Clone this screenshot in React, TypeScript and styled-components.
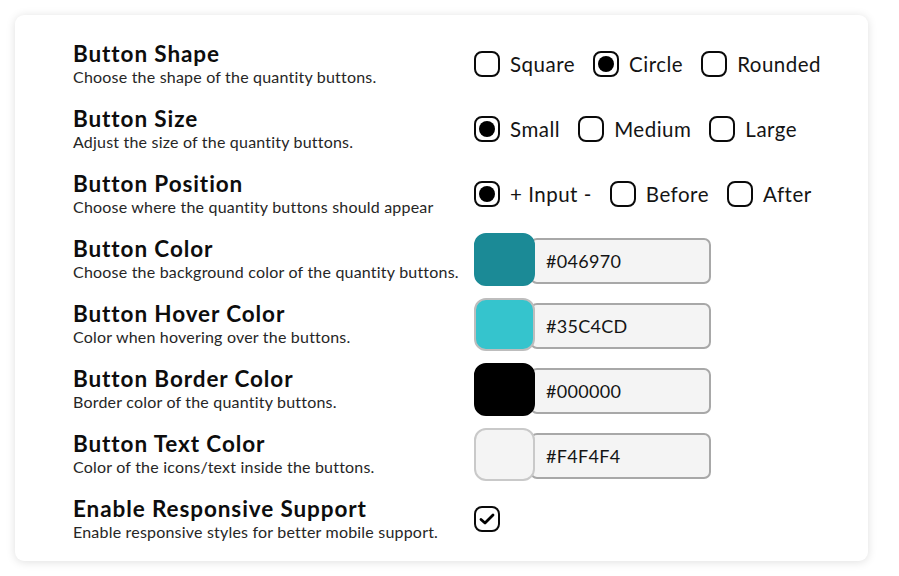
import React from "react";
import styled, { createGlobalStyle } from "styled-components";

const Global = createGlobalStyle`
  html, body { margin: 0; padding: 0; background: #ffffff; }
  body { font-family: "Lato", "Noto Sans", sans-serif; color: #111; }
`;

const Page = styled.div`
  padding: 15px 31px 15px 15px;
`;

const Card = styled.div`
  width: 853px;
  height: 546px;
  box-sizing: border-box;
  background: #fff;
  border-radius: 9px;
  box-shadow: 0 1px 10px rgba(0, 0, 0, 0.13);
  padding: 23px 0 0 58px;
`;

const Grid = styled.div`
  display: grid;
  grid-template-columns: 401px 1fr;
  grid-auto-rows: 52px;
  row-gap: 13px;
`;

const TextBlock = styled.div`
  display: flex;
  flex-direction: column;
  justify-content: center;
`;

const Title = styled.div`
  font-size: 22.5px;
  font-weight: 700;
  letter-spacing: 0.9px;
  line-height: 26px;
  color: #0d0d0d;
`;

const Desc = styled.div`
  font-size: 16px;
  letter-spacing: 0.2px;
  line-height: 20px;
  color: #262626;
`;

const Control = styled.div`
  display: flex;
  align-items: center;
`;

const RadioGroup = styled.div`
  display: flex;
  align-items: center;
  gap: 18px;
`;

const RadioItem = styled.label`
  display: flex;
  align-items: center;
  gap: 10px;
  font-size: 20.5px;
  letter-spacing: 0.5px;
  color: #141414;
`;

const Box = styled.span`
  width: 26px;
  height: 26px;
  box-sizing: border-box;
  border: 2px solid #0a0a0a;
  border-radius: 8px;
  display: flex;
  align-items: center;
  justify-content: center;
`;

const Dot = styled.span`
  width: 16px;
  height: 16px;
  border-radius: 50%;
  background: #000;
`;

const ColorField = styled.div`
  display: flex;
  align-items: center;
`;

const Swatch = styled.div<{ $c: string; $b: string }>`
  width: 61px;
  height: 53px;
  box-sizing: border-box;
  border-radius: 12px;
  background: ${(p) => p.$c};
  border: 2px solid ${(p) => p.$b};
  position: relative;
  z-index: 1;
`;

const HexInput = styled.div`
  width: 181px;
  height: 46px;
  box-sizing: border-box;
  margin-left: -5px;
  margin-top: 3px;
  border: 2px solid #a8a8a8;
  border-radius: 7px;
  background: #f4f4f4;
  padding-left: 14px;
  display: flex;
  align-items: center;
  font-size: 18px;
  letter-spacing: 0.3px;
  color: #141414;
`;

type Row =
  | { title: string; desc: string; kind: "radio"; options: string[]; selected: number }
  | { title: string; desc: string; kind: "color"; color: string; border: string; hex: string }
  | { title: string; desc: string; kind: "check" };

const rows: Row[] = [
  { title: "Button Shape", desc: "Choose the shape of the quantity buttons.", kind: "radio", options: ["Square", "Circle", "Rounded"], selected: 1 },
  { title: "Button Size", desc: "Adjust the size of the quantity buttons.", kind: "radio", options: ["Small", "Medium", "Large"], selected: 0 },
  { title: "Button Position", desc: "Choose where the quantity buttons should appear", kind: "radio", options: ["+ Input -", "Before", "After"], selected: 0 },
  { title: "Button Color", desc: "Choose the background color of the quantity buttons.", kind: "color", color: "#1b8a96", border: "#1b8a96", hex: "#046970" },
  { title: "Button Hover Color", desc: "Color when hovering over the buttons.", kind: "color", color: "#35c4cd", border: "#bdbdbd", hex: "#35C4CD" },
  { title: "Button Border Color", desc: "Border color of the quantity buttons.", kind: "color", color: "#000000", border: "#000000", hex: "#000000" },
  { title: "Button Text Color", desc: "Color of the icons/text inside the buttons.", kind: "color", color: "#f4f4f4", border: "#c9c9c9", hex: "#F4F4F4" },
  { title: "Enable Responsive Support", desc: "Enable responsive styles for better mobile support.", kind: "check" },
];

export default function App() {
  return (
    <>
      <Global />
      <Page>
        <Card>
          <Grid>
            {rows.map((r) => (
              <React.Fragment key={r.title}>
                <TextBlock>
                  <Title>{r.title}</Title>
                  <Desc>{r.desc}</Desc>
                </TextBlock>
                <Control>
                  {r.kind === "radio" && (
                    <RadioGroup>
                      {r.options.map((o, i) => (
                        <RadioItem key={o}>
                          <Box>{i === r.selected && <Dot />}</Box>
                          {o}
                        </RadioItem>
                      ))}
                    </RadioGroup>
                  )}
                  {r.kind === "color" && (
                    <ColorField>
                      <Swatch $c={r.color} $b={r.border} />
                      <HexInput>{r.hex}</HexInput>
                    </ColorField>
                  )}
                  {r.kind === "check" && (
                    <Box>
                      <svg width="18" height="18" viewBox="0 0 18 18">
                        <path d="M3 9.5 L7 13 L15 5" fill="none" stroke="#000" strokeWidth="2.8" strokeLinecap="round" strokeLinejoin="round" />
                      </svg>
                    </Box>
                  )}
                </Control>
              </React.Fragment>
            ))}
          </Grid>
        </Card>
      </Page>
    </>
  );
}
